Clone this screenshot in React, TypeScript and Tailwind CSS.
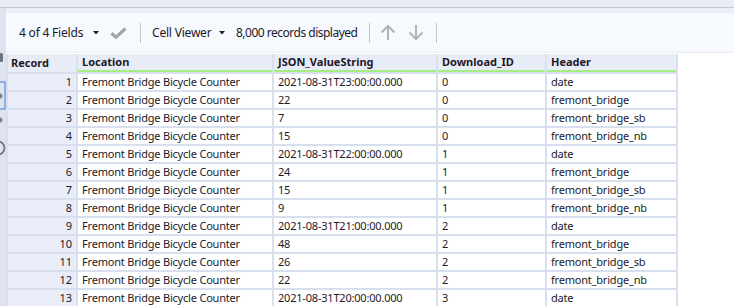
import React from "react";

type Row = {
  record: number;
  location: string;
  value: string;
  downloadId: string;
  header: string;
};

const rows: Row[] = [
  { record: 1, location: "Fremont Bridge Bicycle Counter", value: "2021-08-31T23:00:00.000", downloadId: "0", header: "date" },
  { record: 2, location: "Fremont Bridge Bicycle Counter", value: "22", downloadId: "0", header: "fremont_bridge" },
  { record: 3, location: "Fremont Bridge Bicycle Counter", value: "7", downloadId: "0", header: "fremont_bridge_sb" },
  { record: 4, location: "Fremont Bridge Bicycle Counter", value: "15", downloadId: "0", header: "fremont_bridge_nb" },
  { record: 5, location: "Fremont Bridge Bicycle Counter", value: "2021-08-31T22:00:00.000", downloadId: "1", header: "date" },
  { record: 6, location: "Fremont Bridge Bicycle Counter", value: "24", downloadId: "1", header: "fremont_bridge" },
  { record: 7, location: "Fremont Bridge Bicycle Counter", value: "15", downloadId: "1", header: "fremont_bridge_sb" },
  { record: 8, location: "Fremont Bridge Bicycle Counter", value: "9", downloadId: "1", header: "fremont_bridge_nb" },
  { record: 9, location: "Fremont Bridge Bicycle Counter", value: "2021-08-31T21:00:00.000", downloadId: "2", header: "date" },
  { record: 10, location: "Fremont Bridge Bicycle Counter", value: "48", downloadId: "2", header: "fremont_bridge" },
  { record: 11, location: "Fremont Bridge Bicycle Counter", value: "26", downloadId: "2", header: "fremont_bridge_sb" },
  { record: 12, location: "Fremont Bridge Bicycle Counter", value: "22", downloadId: "2", header: "fremont_bridge_nb" },
  { record: 13, location: "Fremont Bridge Bicycle Counter", value: "2021-08-31T20:00:00.000", downloadId: "3", header: "date" },
];

const columns = ["Location", "JSON_ValueString", "Download_ID", "Header"];

function Caret() {
  return (
    <svg width="6" height="4" viewBox="0 0 6 4" className="shrink-0">
      <path d="M0 0 H6 L3 3.5 Z" fill="#222" />
    </svg>
  );
}

function Separator() {
  return <div className="h-[20px] w-px shrink-0 bg-[#c4c4c4]" />;
}

function SideStrip() {
  // cut-off tool icons at the left edge
  return (
    <div className="w-[6px] shrink-0 bg-[#dfe3ee]">
      <svg width="6" height="160" viewBox="0 0 6 160" className="mt-[40px]">
        <rect x="-3" y="5" width="6" height="9" rx="1.5" fill="#6f737e" />
        <rect x="-4" y="34" width="9" height="27" fill="none" stroke="#3d7fd6" strokeWidth="1" />
        <circle cx="0" cy="48" r="2.5" fill="#7f838d" />
        <circle cx="0" cy="72" r="2.5" fill="#7f838d" />
        <circle cx="-2" cy="100" r="6.5" fill="none" stroke="#6f737e" strokeWidth="1.8" />
      </svg>
    </div>
  );
}

export default function App() {
  return (
    <div
      className="flex h-[306px] w-[734px] flex-col overflow-hidden bg-white text-[12px] text-[#1c1a28]"
      style={{ fontFamily: '"Noto Sans", "Open Sans", Arial, sans-serif' }}
    >
      <div className="h-[8px] shrink-0 border-b border-[#c6c8cc] bg-[#e9ecf6]" />
      <div className="flex min-h-0 flex-1">
        <SideStrip />
        <div className="flex min-w-0 flex-1 flex-col bg-white">
          <div className="h-[5px] shrink-0 bg-[#eceff8]" />
          <div className="flex h-[40px] shrink-0 items-center border-b border-[#eaecf2] bg-[#f6f9fe] pl-[13px]">
            <span className="w-[70px] shrink-0 tracking-[-0.2px]">4 of 4 Fields</span>
            <span className="ml-[4px]"><Caret /></span>
            <svg width="17" height="12" viewBox="0 0 17 12" className="ml-[11px] shrink-0">
              <path d="M1.5 6.2 L6 10.2 L15.5 1.5" fill="none" stroke="#a4a4a4" strokeWidth="3.2" />
            </svg>
            <span className="ml-[13px]"><Separator /></span>
            <span className="ml-[11px] w-[64px] shrink-0 tracking-[-0.2px]">Cell Viewer</span>
            <span className="ml-[3px]"><Caret /></span>
            <span className="ml-[11px] w-[124px] shrink-0 tracking-[-0.5px]">8,000 records displayed</span>
            <span className="ml-[9px]"><Separator /></span>
            <svg width="16" height="17" viewBox="0 0 16 17" className="ml-[10px] shrink-0">
              <path d="M8 16 V2 M1.5 8.5 L8 2 L14.5 8.5" fill="none" stroke="#b3b3b3" strokeWidth="2" />
            </svg>
            <svg width="16" height="17" viewBox="0 0 16 17" className="ml-[12px] shrink-0">
              <path d="M8 1 V15 M1.5 8.5 L8 15 L14.5 8.5" fill="none" stroke="#b3b3b3" strokeWidth="2" />
            </svg>
            <span className="ml-[12px]"><Separator /></span>
          </div>
          <div className="h-[1px] shrink-0 bg-white" />
          <div className="w-fit shrink-0 bg-[#d8dfef] pb-[2px] pl-[2px] pr-[2px] text-[11px]">
            <div className="grid grid-cols-[68px_194px_162px_107px_129px] gap-[2px]">
              <div className="flex h-[18px] items-center bg-[#e8ecf7] pl-[3px] font-bold">Record</div>
              {columns.map((c) => (
                <div
                  key={c}
                  className="flex h-[18px] items-center border-b-2 border-[#a5ee80] bg-[#e8ecf7] pl-[4px] font-bold"
                >
                  {c}
                </div>
              ))}
              {rows.map((r) => (
                <React.Fragment key={r.record}>
                  <div className="flex h-[16px] items-center justify-end bg-[#e9edf8] pr-[4px]">{r.record}</div>
                  <div className="flex h-[16px] items-center bg-white pl-[4px] tracking-[-0.2px]">{r.location}</div>
                  <div className="flex h-[16px] items-center bg-white pl-[4px] tracking-[-0.2px]">{r.value}</div>
                  <div className="flex h-[16px] items-center bg-white pl-[4px]">{r.downloadId}</div>
                  <div className="flex h-[16px] items-center bg-white pl-[4px] tracking-[-0.2px]">{r.header}</div>
                </React.Fragment>
              ))}
            </div>
          </div>
        </div>
      </div>
    </div>
  );
}
